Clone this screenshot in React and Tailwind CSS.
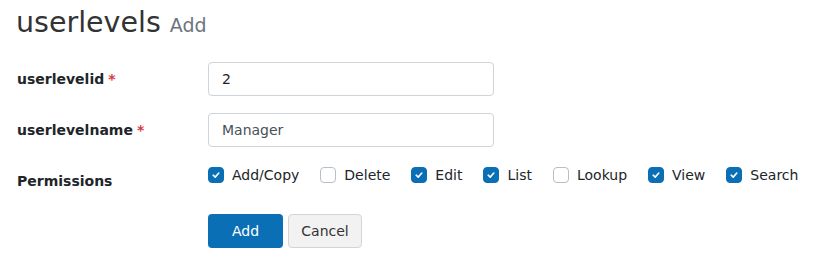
import { useState } from "react";

const PERMS = [
  { name: "Add/Copy", checked: true },
  { name: "Delete", checked: false },
  { name: "Edit", checked: true },
  { name: "List", checked: true },
  { name: "Lookup", checked: false },
  { name: "View", checked: true },
  { name: "Search", checked: true },
];

function Check({ checked, onChange }) {
  return (
    <span
      onClick={onChange}
      className={
        "w-4 h-4 rounded-[4px] flex items-center justify-center shrink-0 " +
        (checked ? "bg-[#0a6fb5] border border-[#0a6fb5]" : "bg-white border border-[#b8bec5]")
      }
    >
      {checked && (
        <svg width="10" height="10" viewBox="0 0 10 10">
          <path d="M2.2 5.2 L4.2 7.1 L7.8 3" fill="none" stroke="white" strokeWidth="1.6" strokeLinecap="round" strokeLinejoin="round" />
        </svg>
      )}
    </span>
  );
}

export default function App() {
  const [perms, setPerms] = useState(PERMS);

  const toggle = (i) =>
    setPerms(prev => prev.map((p, j) => (j === i ? { ...p, checked: !p.checked } : p)));

  return (
    <div className="px-4 pt-[3px] text-[14px] text-[#212529] bg-white min-h-[274px]" style={{ fontFamily: '"DejaVu Sans", sans-serif' }}>
      <h1 className="text-[28.5px] leading-[40px] text-[#333]">
        userlevels <span className="text-[19px] text-[#6c757d]">Add</span>
      </h1>

      <div className="mt-[17px] flex flex-col">
        <div className="flex items-center">
          <label className="w-[192px] font-bold pl-px">
            userlevelid<span className="text-[#dc3545] ml-1">*</span>
          </label>
          <input
            defaultValue="2"
            className="w-[286px] h-[34px] border border-[#ced4da] rounded-[4px] px-[13px] outline-none"
          />
        </div>

        <div className="flex items-center mt-[17px]">
          <label className="w-[192px] font-bold pl-px">
            userlevelname<span className="text-[#dc3545] ml-1">*</span>
          </label>
          <input
            defaultValue="Manager"
            className="w-[286px] h-[34px] border border-[#ced4da] rounded-[4px] px-[13px] outline-none text-[#495057]"
          />
        </div>

        <div className="flex mt-[14px]">
          <label className="w-[192px] font-bold pl-px pt-[10px]">Permissions</label>
          <div className="flex items-center gap-[21px] pt-[3px] h-[25px]">
            {perms.map((p, i) => (
              <div key={p.name} className="flex items-center gap-2">
                <Check checked={p.checked} onChange={() => toggle(i)} />
                <span>{p.name}</span>
              </div>
            ))}
          </div>
        </div>

        <div className="flex gap-[5px] ml-[192px] mt-[22px]">
          <button className="w-[75px] h-[34px] rounded-[4px] bg-[#0a6fb5] text-white">Add</button>
          <button className="w-[74px] h-[34px] rounded-[4px] bg-[#f2f2f2] border border-[#d4d4d4] text-[#333]">Cancel</button>
        </div>
      </div>
    </div>
  );
}
